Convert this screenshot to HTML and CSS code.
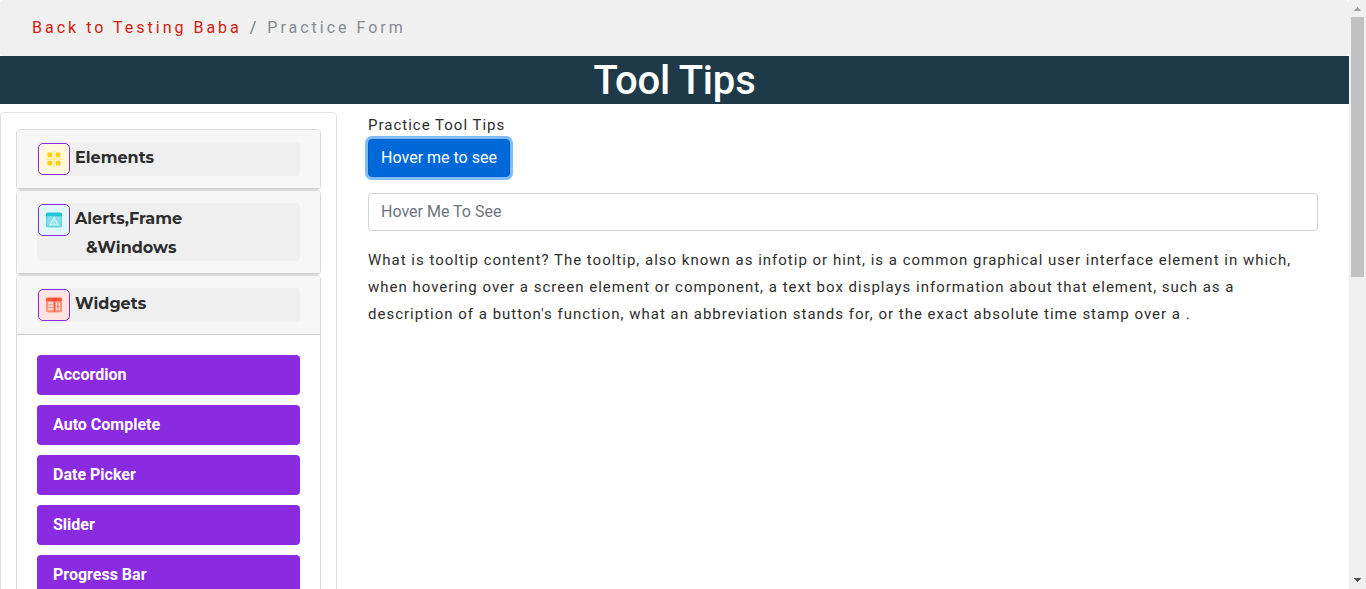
FILE: index.html
```html
<!DOCTYPE html>
<html lang="en">
<head>
<meta charset="utf-8">
<title>Tool Tips</title>
<link rel="stylesheet" href="styles.css">
</head>
<body>
<div class="window">
  <div class="page">
    <nav class="breadcrumb"><a class="back">Back to Testing Baba</a><span class="slash"> / </span><span class="current">Practice Form</span></nav>
    <h1 class="title">Tool Tips</h1>
    <div class="columns">
      <aside class="sidebar">
        <section class="card">
          <div class="card-header"><div class="toggle">
            <span class="icon yellow"><svg width="16" height="16" viewBox="0 0 16 16"><path d="M8 0v16M0 8h16" stroke="#ffe98a" stroke-width="1.4"/><g fill="#ffd00f"><rect x="1.5" y="1.5" width="4.7" height="4.7" rx="1"/><rect x="9.8" y="1.5" width="4.7" height="4.7" rx="1"/><rect x="1.5" y="9.8" width="4.7" height="4.7" rx="1"/><rect x="9.8" y="9.8" width="4.7" height="4.7" rx="1"/></g></svg></span>
            <span class="label">Elements</span>
          </div></div>
        </section>
        <section class="card">
          <div class="card-header"><div class="toggle">
            <span class="icon cyan"><svg width="16" height="16" viewBox="0 0 16 16"><rect x=".7" y="1.3" width="14.6" height="13.4" rx="1.3" fill="#84dfe9" stroke="#62d5e2" stroke-width="1.4"/><path d="M0 4.2V2Q0 .7 1.3.7h13.4Q16 .7 16 2v2.2z" fill="#22c5d8"/><path d="M8 5.4l4 7.3H4z" fill="#84dfe9" stroke="#d9f7fa" stroke-width="1.1"/><path d="M8 8v2.4M8 11v.9" stroke="#e0f9fc" stroke-width=".9"/></svg></span>
            <span class="label">Alerts,Frame</span>
            <span class="label second">&amp;Windows</span>
          </div></div>
        </section>
        <section class="card">
          <div class="card-header"><div class="toggle">
            <span class="icon red"><svg width="16" height="16" viewBox="0 0 16 16"><rect x=".7" y="1.3" width="14.6" height="13.4" rx="1.3" fill="#ff9e8d" stroke="#ff8f7b" stroke-width="1.4"/><path d="M0 4.2V2Q0 .7 1.3.7h13.4Q16 .7 16 2v2.2z" fill="#ff5436"/><path d="M2 6h5M2 9h5M2 12h5" stroke="#ffe4df" stroke-width="1.5"/><path d="M8.5 4v11" stroke="#ff5436" stroke-width="1.2"/><path d="M10 6h4v2.8h-4zM10 10.3h4v2.6h-4z" fill="#ffe4df"/><path d="M12 6v7" stroke="#ff6b50" stroke-width="1"/></svg></span>
            <span class="label">Widgets</span>
          </div></div>
          <div class="links">
            <a class="link">Accordion</a>
            <a class="link">Auto Complete</a>
            <a class="link">Date Picker</a>
            <a class="link">Slider</a>
            <a class="link">Progress Bar</a>
          </div>
        </section>
      </aside>
      <main class="content">
        <p class="caption">Practice Tool Tips</p>
        <button class="btn">Hover me to see</button>
        <input class="field" type="text" placeholder="Hover Me To See">
        <p class="text">What is tooltip content? The tooltip, also known as infotip or hint, is a common graphical user interface element in which, when hovering over a screen element or component, a text box displays information about that element, such as a description of a button's function, what an abbreviation stands for, or the exact absolute time stamp over a .</p>
      </main>
    </div>
  </div>
  <div class="scrollbar">
    <svg class="arrow" width="17" height="17" shape-rendering="crispEdges"><path d="M8 7h1v1h1v1h1v1h1v1H5v-1h1V9h1V8h1z" fill="#a3a3a3"/></svg>
    <div class="thumb"></div>
    <svg class="arrow" width="17" height="17" shape-rendering="crispEdges"><path d="M5 6h7v1h-1v1h-1v1H9v1H8V9H7V8H6V7H5z" fill="#505050"/></svg>
  </div>
</div>
</body>
</html>
```
FILE: styles.css
```css
* { box-sizing: border-box; }
body { margin: 0; overflow: hidden; font-family: Roboto, sans-serif; font-size: 16px; line-height: 24px; color: #2d2d2d; background: #fff; }
.window { display: flex; height: 589px; overflow: hidden; }
.page { flex: 1; min-width: 0; }
.breadcrumb { height: 56px; padding: 16px 32px; background: #f0f0f0; border-radius: 4px; letter-spacing: 3px; white-space: pre; color: #868b90; }
.back { color: #d0200f; }
.slash { color: #6c757d; margin-left: 1px; margin-right: 1px; }
.title { margin: 0; height: 48px; padding-top: 1px; background: #1e3948; color: #fff; text-align: center; font-size: 40px; line-height: 48px; font-weight: 500; letter-spacing: -.2px; }
.columns { display: flex; padding-top: 8px; }
.sidebar { width: 337px; height: 640px; flex: none; padding: 16px 15px; border: 1px solid #dee2e6; border-radius: 4px; }
.card { border: 1px solid #dbdbdb; border-radius: 4px; overflow: hidden; }
.card-header { padding: 12px 20px; background: #f7f7f7; border-bottom: 1px solid #cecece; }
.toggle { display: grid; grid-template-columns: 32px 1fr; grid-template-rows: 29px; column-gap: 5px; align-items: start; min-height: 34px; padding-left: 1px; background: #efefef; border-radius: 4px; }
.icon { display: flex; align-items: center; justify-content: center; width: 32px; height: 32px; margin-top: 1px; border: 1px solid #8a2be2; border-radius: 5px; grid-row: 1; }
.yellow { background: #fff8dc; }
.cyan { background: #e1f8fb; }
.red { background: #ffe4e1; }
.label { height: 29px; padding-top: 1px; font-family: Montserrat, Inter, sans-serif; font-size: 16px; line-height: 29px; font-weight: 700; color: #2d2d2d; white-space: nowrap; }
.second { grid-column: 2; padding-left: 11px; }
.links { display: flex; flex-direction: column; gap: 10px; padding: 20px; }
.link { height: 40px; padding: 8px 16px; border-radius: 4px; background: #8a2be2; color: #fff; font-weight: 700; line-height: 24px; }
.content { flex: 1; min-width: 0; padding: 0 31px; }
.caption { margin: 0; height: 27px; line-height: 27px; font-size: 15px; letter-spacing: 1px; }
.btn { display: block; width: 142px; height: 38px; padding: 0; border: 1px solid #0062cc; border-radius: 4px; background: #0069d9; box-shadow: 0 0 0 3px #80baff; color: #fff; font: 16px/24px Roboto, sans-serif; }
.field { display: block; width: 100%; height: 38px; margin: 16px 0; padding: 5px 12px 7px; border: 1px solid #ced4da; border-radius: 4px; font: 16px/24px Roboto, sans-serif; }
.field::placeholder { color: #6c757d; opacity: 1; }
.text { margin: 0; font-size: 15px; line-height: 27px; letter-spacing: 1px; }
.scrollbar { width: 17px; display: flex; flex-direction: column; background: #f0f0f0; }
.arrow { display: block; flex: none; }
.thumb { width: 13px; height: 260px; margin: 0 auto auto 2px; background: #c1c1c1; }
```
